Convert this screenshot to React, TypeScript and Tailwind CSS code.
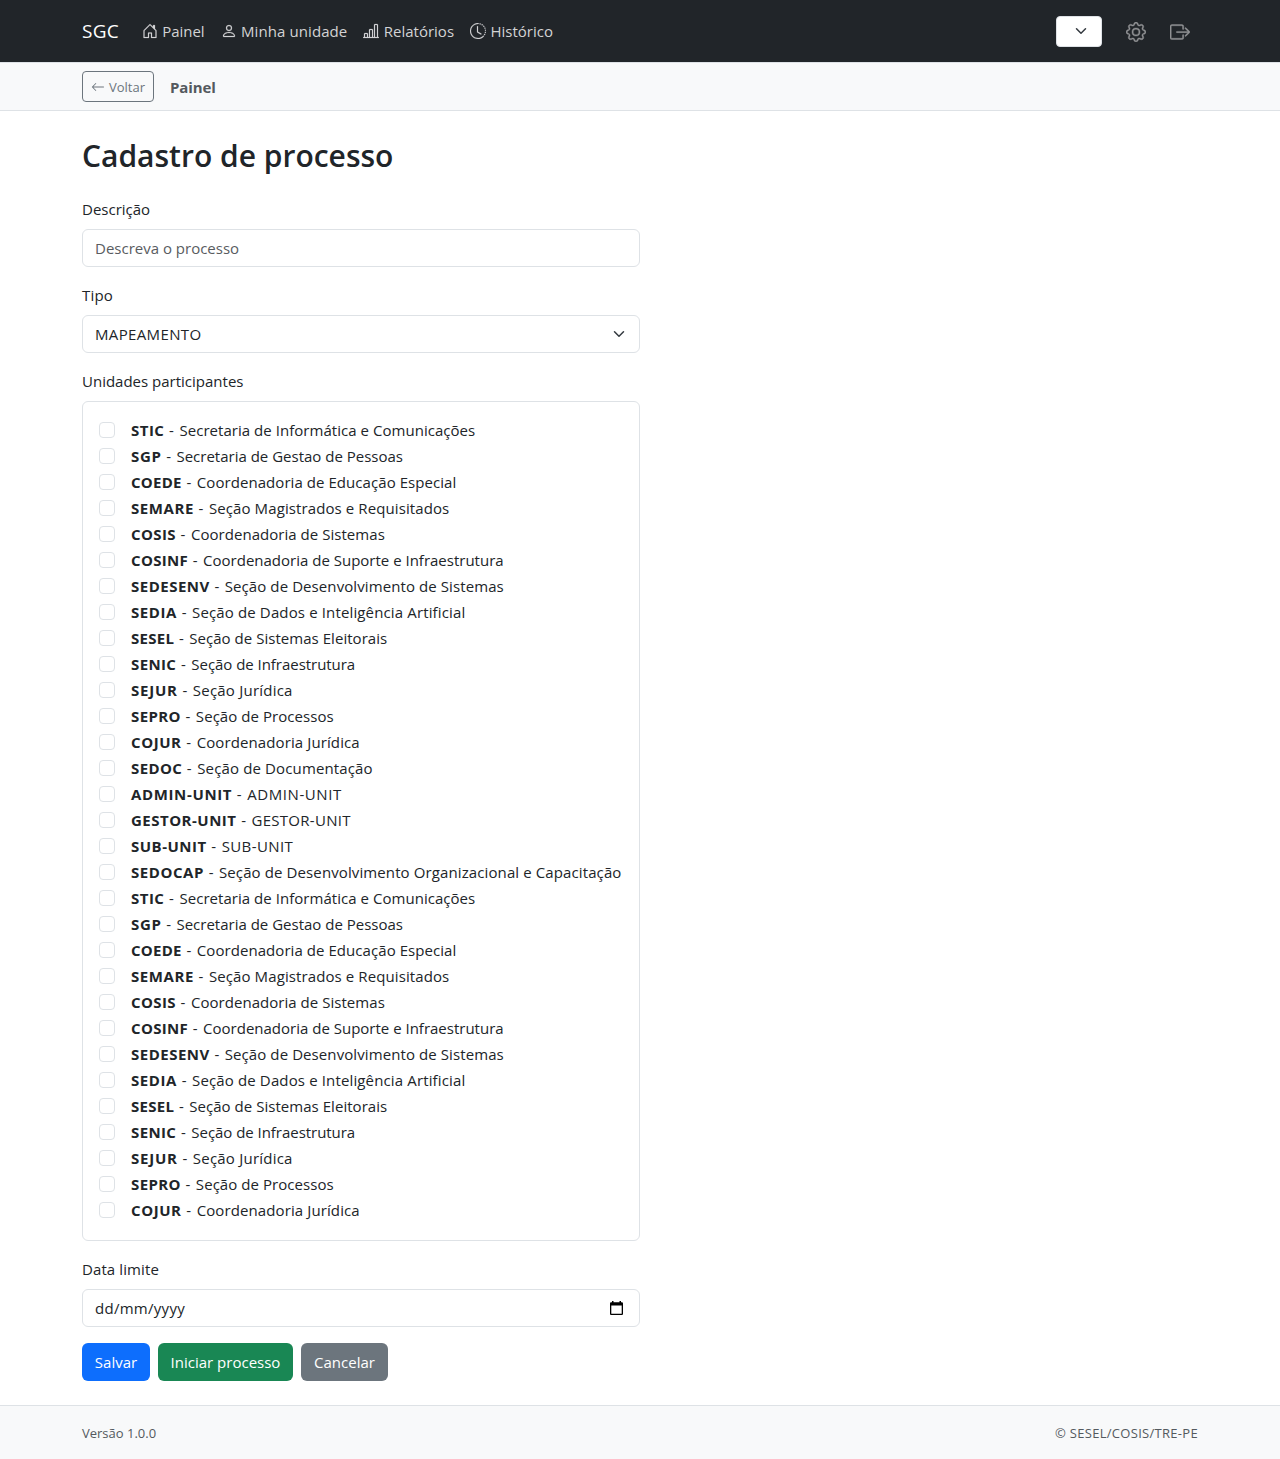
import { BsArrowLeft, BsBarChartLine, BsBoxArrowRight, BsClockHistory, BsGear, BsHouseDoor, BsPerson } from "react-icons/bs";

// Acronym, its tracking, unit name, its tracking.
type Unit = [string, string, string, string];

const units: Unit[] = [
  ["STIC", "tracking-[0.48px]", "Secretaria de Informática e Comunicações", "tracking-[0.04px]"],
  ["SGP", "tracking-[0.63px]", "Secretaria de Gestao de Pessoas", "tracking-[0px]"],
  ["COEDE", "tracking-[0.28px]", "Coordenadoria de Educação Especial", "tracking-[0.06px]"],
  ["SEMARE", "tracking-[0.57px]", "Seção Magistrados e Requisitados", "tracking-[0.1px]"],
  ["COSIS", "tracking-[0.38px]", "Coordenadoria de Sistemas", "tracking-[0.04px]"],
  ["COSINF", "tracking-[0.32px]", "Coordenadoria de Suporte e Infraestrutura", "tracking-[0px]"],
  ["SEDESENV", "tracking-[0.49px]", "Seção de Desenvolvimento de Sistemas", "tracking-[0.09px]"],
  ["SEDIA", "tracking-[0.58px]", "Seção de Dados e Inteligência Artificial", "tracking-[0.14px]"],
  ["SESEL", "tracking-[0.28px]", "Seção de Sistemas Eleitorais", "tracking-[0.04px]"],
  ["SENIC", "tracking-[0.38px]", "Seção de Infraestrutura", "tracking-[-0.04px]"],
  ["SEJUR", "tracking-[0.78px]", "Seção Jurídica", "tracking-[0.22px]"],
  ["SEPRO", "tracking-[0.38px]", "Seção de Processos", "tracking-[0.06px]"],
  ["COJUR", "tracking-[0.58px]", "Coordenadoria Jurídica", "tracking-[0.11px]"],
  ["SEDOC", "tracking-[0.38px]", "Seção de Documentação", "tracking-[0.14px]"],
  ["ADMIN-UNIT", "tracking-[0.64px]", "ADMIN-UNIT", "tracking-[0.57px]"],
  ["GESTOR-UNIT", "tracking-[0.49px]", "GESTOR-UNIT", "tracking-[0.28px]"],
  ["SUB-UNIT", "tracking-[0.49px]", "SUB-UNIT", "tracking-[0.41px]"],
  ["SEDOCAP", "tracking-[0.56px]", "Seção de Desenvolvimento Organizacional e Capacitação", "tracking-[0.11px]"],
];
const rows = [...units, ...units.slice(0, 13)];

function Chevron() {
  return (
    <svg viewBox="0 0 16 16" className="h-3 w-4" fill="none" stroke="#343a40" strokeWidth="2" strokeLinecap="round" strokeLinejoin="round">
      <path d="m2 5 6 6 6-6" />
    </svg>
  );
}

function Calendar() {
  return (
    <svg viewBox="0 0 13 14" className="mr-1 h-[14px] w-[13px]" fill="black">
      <path fillRule="evenodd" d="M2 0h1.5v1.3h6V0H11v1.3h.7c.7 0 1.3.5 1.3 1.2v10.2c0 .7-.6 1.3-1.3 1.3H1.3C.6 14 0 13.4 0 12.7V2.5c0-.7.6-1.2 1.3-1.2H2zM1.3 4.6v8.1h10.4V4.6z" />
    </svg>
  );
}

export default function App() {
  return (
    <div className="min-h-[1459px] bg-white font-['Open_Sans',sans-serif] text-[15px] leading-6 text-[#212529]">
      <nav className="h-[62px] bg-[#212529]">
        <div className="mx-auto flex h-full w-[1116px] items-center text-[#d3d3d4]">
          <span className="mr-[23px] text-[19px] tracking-[0.25px] text-white">SGC</span>
          <a className="mr-4 flex items-center gap-[4.4px]"><BsHouseDoor size={16} className="stroke-[0.2]" /><span className="tracking-[-0.05px]">Painel</span></a>
          <a className="mr-4 flex items-center gap-[4.4px]"><BsPerson size={16} className="stroke-[0.2]" /><span className="tracking-[0.09px]">Minha unidade</span></a>
          <a className="mr-4 flex items-center gap-[4.4px]"><BsBarChartLine size={16} className="stroke-[0.2]" /><span>Relatórios</span></a>
          <a className="flex items-center gap-[4.4px]"><BsClockHistory size={16} className="stroke-[0.2]" /><span>Histórico</span></a>
          <div className="ml-auto flex items-center">
            <button className="flex h-[31px] w-[46px] items-center justify-end rounded border border-[#dee2e6] bg-white pr-3"><Chevron /></button>
            <BsGear size={20} className="mt-px ml-6 stroke-[0.3] text-[#909294]" />
            <BsBoxArrowRight size={20} className="mt-px mr-2 ml-6 stroke-[0.3] text-[#909294]" />
          </div>
        </div>
      </nav>
      <div className="border-y border-[#dee2e6] bg-[#f8f9fa] py-2">
        <div className="mx-auto flex w-[1116px] items-center">
          <button className="flex h-[31px] w-[72px] items-center gap-1 rounded border border-[#6c757d] px-2 text-[13px] text-[#6c757d]"><BsArrowLeft size={14} /><span>Voltar</span></button>
          <span className="ml-4 font-bold tracking-[-0.1px] text-[#54595e]">Painel</span>
        </div>
      </div>
      <main className="mx-auto w-[1116px] pt-6">
        <h2 className="mb-[22px] w-fit pt-0.5 text-[30px] leading-[38.4px] font-semibold">Cadastro de processo</h2>
        <div className="w-[558px]">
          <label className="mb-2 block">Descrição</label>
          <div className="mb-4 flex h-[38px] items-center rounded-md border border-[#dee2e6] px-3 text-[#595c5f]">Descreva o processo</div>
          <label className="mb-2 block tracking-[0.2px]">Tipo</label>
          <div className="mb-4 flex h-[38px] items-center justify-between rounded-md border border-[#dee2e6] px-3"><span className="tracking-[0.36px]">MAPEAMENTO</span><Chevron /></div>
          <label className="mb-2 block">Unidades participantes</label>
          <div className="mb-4 rounded-md border border-[#dee2e6] p-4">
            {rows.map(([acronym, acronymTracking, name, nameTracking], i) => (
              <div key={i} className="mb-0.5 flex">
                <div className="mt-1 mr-4 h-4 w-4 shrink-0 rounded border border-[#dee2e6]" />
                <p className="whitespace-nowrap">
                  <b className={acronymTracking}>{acronym}</b>
                  <span className="tracking-[0.8px]"> - </span>
                  <span className={nameTracking}>{name}</span>
                </p>
              </div>
            ))}
          </div>
          <label className="mb-2 block tracking-[0.1px]">Data limite</label>
          <div className="mb-4 flex h-[38px] items-center justify-between rounded-md border border-[#dee2e6] px-3"><span className="tracking-[0.28px]">dd/mm/yyyy</span><Calendar /></div>
          <div className="flex gap-2 text-white">
            <button className="flex h-[38px] w-[68px] items-center justify-center rounded-md bg-[#0d6efd]">Salvar</button>
            <button className="flex h-[38px] w-[135px] items-center justify-center rounded-md bg-[#198754]">Iniciar processo</button>
            <button className="flex h-[38px] w-[87px] items-center justify-center rounded-md bg-[#6c757d]">Cancelar</button>
          </div>
        </div>
      </main>
      <footer className="mt-6 border-t border-[#dee2e6] bg-[#f8f9fa] pt-[17px] pb-[15px] text-[13px] text-[#54595e]">
        <div className="mx-auto flex w-[1116px] justify-between leading-[21px]"><span>Versão 1.0.0</span><span className="tracking-[0.3px]">© SESEL/COSIS/TRE-PE</span></div>
      </footer>
    </div>
  );
}
